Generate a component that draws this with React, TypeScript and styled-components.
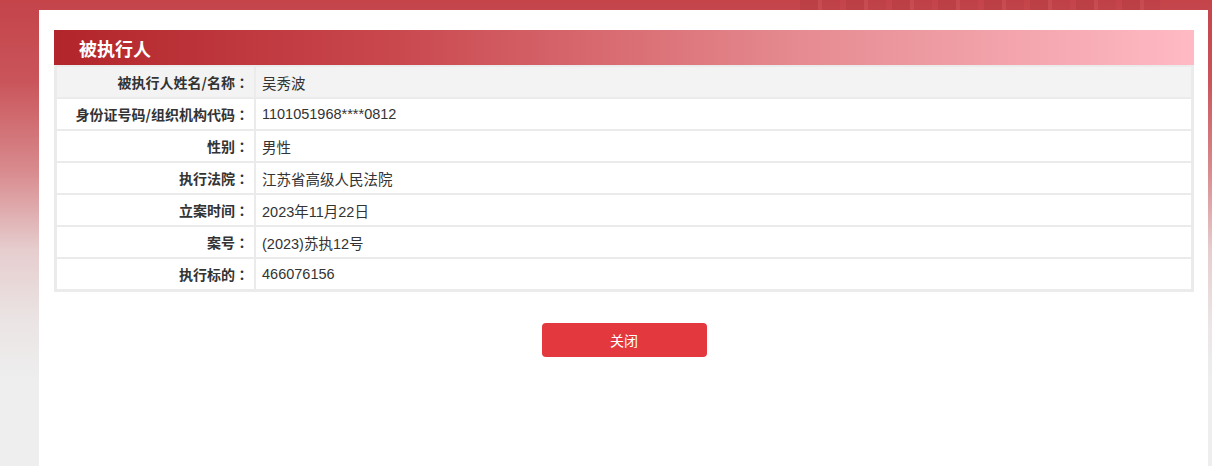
import React from "react";
import styled, { createGlobalStyle } from "styled-components";

const GlobalStyle = createGlobalStyle`
  html, body {
    margin: 0;
    padding: 0;
  }
  body {
    font-family: "Liberation Sans", "Noto Sans CJK SC", sans-serif;
    background: #eeeeee;
  }
`;

const Page = styled.div`
  min-height: 466px;
  box-sizing: border-box;
  padding: 10px 4px 0 39px;
  display: flex;
  background:
    repeating-linear-gradient(
      90deg,
      rgba(110, 20, 25, 0.1) 0px,
      rgba(110, 20, 25, 0.1) 18px,
      rgba(255, 255, 255, 0.04) 18px,
      rgba(255, 255, 255, 0.04) 22px,
      rgba(110, 20, 25, 0.06) 22px,
      rgba(110, 20, 25, 0.06) 40px,
      rgba(255, 255, 255, 0) 40px,
      rgba(255, 255, 255, 0) 46px
    ) 800px 0 / 360px 10px no-repeat,
    linear-gradient(
      to bottom,
      #c4444a 0px,
      #c9545a 80px,
      #d88a8d 170px,
      #e6cdce 250px,
      #ebe4e4 320px,
      #eeeeee 380px,
      #eeeeee 100%
    );
`;

const Panel = styled.div`
  flex: 1;
  background: #ffffff;
  min-height: 456px;
  box-sizing: border-box;
  padding: 20px 14px 0 15px;
  display: flex;
  flex-direction: column;
`;

const SectionHeader = styled.div`
  height: 35px;
  display: flex;
  align-items: center;
  padding-left: 25px;
  background: linear-gradient(to right, #b2252a 0%, #c9484e 30%, #e58a90 65%, #ffbac4 100%);
  color: #ffffff;
  font-size: 18px;
  font-weight: bold;
  font-family: "Noto Sans CJK SC", sans-serif;
`;

const InfoTable = styled.div`
  display: grid;
  grid-template-columns: 197px 1fr;
  column-gap: 2px;
  row-gap: 2px;
  background: #ebebeb;
  padding: 2px 3px 3px 3px;
`;

const LabelCell = styled.div<{ $shaded: boolean }>`
  height: 30px;
  display: flex;
  align-items: center;
  justify-content: flex-end;
  padding-right: 5px;
  background: ${(p) => (p.$shaded ? "#f3f3f3" : "#ffffff")};
  color: #333333;
  font-size: 14px;
  font-weight: bold;
  font-family: "Noto Sans CJK SC", sans-serif;
  white-space: nowrap;
`;

const Colon = styled.span`
  font-family: "Noto Sans CJK JP", sans-serif;
`;

const ValueCell = styled.div<{ $shaded: boolean }>`
  height: 30px;
  display: flex;
  align-items: center;
  padding-left: 6px;
  background: ${(p) => (p.$shaded ? "#f3f3f3" : "#ffffff")};
  color: #333333;
  font-size: 14.5px;
  white-space: nowrap;
`;

const ButtonRow = styled.div`
  display: flex;
  justify-content: center;
  padding-top: 31px;
`;

const CloseButton = styled.button`
  width: 165px;
  height: 34px;
  border: none;
  border-radius: 4px;
  background: #e3383d;
  color: #ffffff;
  font-size: 14px;
  font-family: "Noto Sans CJK SC", sans-serif;
  cursor: pointer;
  padding: 0;
`;

const rows: [string, string][] = [
  ["被执行人姓名/名称", "吴秀波"],
  ["身份证号码/组织机构代码", "1101051968****0812"],
  ["性别", "男性"],
  ["执行法院", "江苏省高级人民法院"],
  ["立案时间", "2023年11月22日"],
  ["案号", "(2023)苏执12号"],
  ["执行标的", "466076156"],
];

export default function App() {
  return (
    <>
      <GlobalStyle />
      <Page>
        <Panel>
          <SectionHeader>被执行人</SectionHeader>
          <InfoTable>
            {rows.map(([label, value], i) => (
              <React.Fragment key={label}>
                <LabelCell $shaded={i === 0}>
                  {label}
                  <Colon>：</Colon>
                </LabelCell>
                <ValueCell $shaded={i === 0}>{value}</ValueCell>
              </React.Fragment>
            ))}
          </InfoTable>
          <ButtonRow>
            <CloseButton>关闭</CloseButton>
          </ButtonRow>
        </Panel>
      </Page>
    </>
  );
}
